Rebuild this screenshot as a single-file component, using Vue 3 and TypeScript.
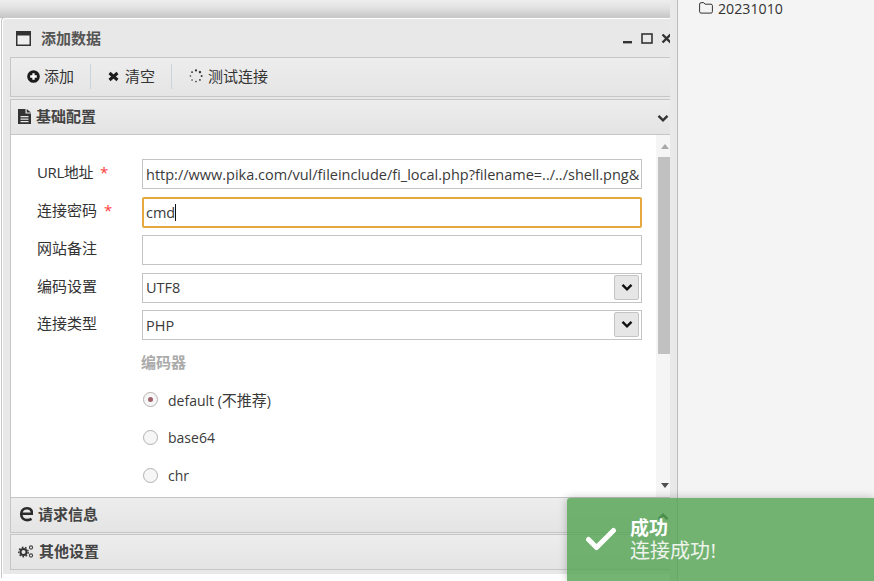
<script setup lang="ts">
interface Row { label: string; value: string; latin?: boolean; required?: boolean; focus?: boolean; select?: boolean }
const rows: Row[] = [
  { label: 'URL地址', value: 'http://www.pika.com/vul/fileinclude/fi_local.php?filename=../../shell.png&', required: true, latin: true },
  { label: '连接密码', value: 'cmd', required: true, focus: true },
  { label: '网站备注', value: '' },
  { label: '编码设置', value: 'UTF8', select: true },
  { label: '连接类型', value: 'PHP', select: true },
]
const radios = [
  { label: 'default (', note: '不推荐', tail: ')', checked: true },
  { label: 'base64', note: '', tail: '', checked: false },
  { label: 'chr', note: '', tail: '', checked: false },
]
const dots = [
  { d: 0, r: 1.1 }, { d: 45, r: 1.2 }, { d: 90, r: 1 }, { d: 135, r: 0.9 },
  { d: 180, r: 0.8 }, { d: 225, r: 0.75 }, { d: 270, r: 0.8 }, { d: 315, r: 0.9 },
]
</script>

<template>
  <div class="page">
    <main class="left">
      <div class="upper"></div>
      <section class="window">
        <header class="titlebar">
          <svg class="win-icon" width="15" height="15" viewBox="0 0 15 15">
            <rect x="0.75" y="0.75" width="13.5" height="13.500" fill="#efefef" stroke="#333" stroke-width="1.5" />
            <rect x="0" y="0" width="15" height="4.500" fill="#333" />
          </svg>
          <span class="win-title">添加数据</span>
          <span class="win-ctrls">
            <svg width="11" height="11" viewBox="0 0 11 11"><rect x="1" y="8" width="9" height="2.4" fill="#333" /></svg>
            <svg width="12" height="11" viewBox="0 0 12 11"><rect x="1" y="1" width="10" height="9" fill="none" stroke="#333" stroke-width="1.6" /></svg>
            <svg width="11" height="11" viewBox="0 0 11 11"><path d="M1.500 1.500 9.500 9.500M9.500 1.500 1.500 9.500" stroke="#333" stroke-width="2.400" /></svg>
          </span>
        </header>

        <div class="inner">
          <div class="toolbar">
            <button class="tool first">
              <svg width="13" height="13" viewBox="0 0 13 13">
                <circle cx="6.500" cy="6.500" r="6.300" fill="#1c1c1c" />
                <path d="M6.500 3.200v6.600M3.200 6.500h6.600" stroke="#fff" stroke-width="2.300" />
              </svg>
              <span>添加</span>
            </button>
            <i class="sep"></i>
            <button class="tool second">
              <svg width="11" height="11" viewBox="0 0 11 11">
                <path d="M1.500 2 9.500 9M9.500 2 1.500 9" stroke="#1c1c1c" stroke-width="3" />
              </svg>
              <span>清空</span>
            </button>
            <i class="sep"></i>
            <button class="tool third">
              <svg width="14" height="14" viewBox="0 0 14 14">
                <circle v-for="o in dots" :key="o.d" cx="7" cy="1.400" :r="o.r" fill="#333" :transform="`rotate(${o.d} 7 7)`" />
              </svg>
              <span>测试连接</span>
            </button>
          </div>

          <div class="acc first-acc">
            <svg width="13" height="15" viewBox="0 0 13 15">
              <path d="M0 0h7.500v4.500H13V15H0zM8.700 0 13 3.400H8.700zM2.500 7v1.200h8V7zm0 2.500v1.200h8V9.500zm0 2.500v1.200h8V12z" fill="#333" fill-rule="evenodd" />
            </svg>
            <span>基础配置</span>
            <svg class="chev" width="12" height="9" viewBox="0 0 12 9"><path d="M1.500 1.800 6 6.300l4.500-4.500" fill="none" stroke="#333" stroke-width="2.400" /></svg>
          </div>

          <div class="content">
            <form class="form" @submit.prevent>
              <div v-for="r in rows" :key="r.label" class="row">
                <label class="lbl" :class="{ latin: r.latin }">{{ r.label }}<em v-if="r.required">*</em></label>
                <div class="field" :class="{ focus: r.focus }">
                  <span class="val">{{ r.value }}</span>
                  <i v-if="r.focus" class="caret"></i>
                  <span v-if="r.select" class="sel-btn">
                    <svg width="12" height="9" viewBox="0 0 12 9"><path d="M1.500 1.800 6 6.300l4.500-4.500" fill="none" stroke="#111" stroke-width="2.400" /></svg>
                  </span>
                </div>
              </div>
              <div class="enc-title">编码器</div>
              <div v-for="o in radios" :key="o.label" class="radio">
                <span class="dot" :class="{ on: o.checked }"></span>
                <span class="radio-text">{{ o.label }}<b v-if="o.note">{{ o.note }}</b>{{ o.tail }}</span>
              </div>
            </form>
            <div class="scroll">
              <i class="arrow up"></i>
              <i class="thumb"></i>
              <i class="arrow down"></i>
            </div>
          </div>

          <div class="acc">
            <svg width="15" height="16" viewBox="0 0 15 15">
              <path d="M3.200 7.200H14C14 3.800 12 1.800 9 1.800 5.400 1.800 3.200 4.400 3.200 7.600 3.200 11.200 5.500 13.600 9 13.600 10.800 13.600 12.200 13.200 13.600 12.400" fill="none" stroke="#2b2b2b" stroke-width="2.600" />
            </svg>
            <span>请求信息</span>
            <svg class="chev" width="12" height="9" viewBox="0 0 12 9"><path d="M1.500 7.200 6 2.700l4.500 4.500" fill="none" stroke="#333" stroke-width="2.400" /></svg>
          </div>
          <div class="acc last-acc">
            <svg width="16" height="15" viewBox="0 0 16 14">
              <circle cx="5.500" cy="7.500" r="3" fill="none" stroke="#333" stroke-width="2" />
              <circle cx="5.500" cy="7.500" r="4.700" fill="none" stroke="#333" stroke-width="1.400" stroke-dasharray="1.700 1.600" />
              <circle cx="13" cy="3" r="1.600" fill="none" stroke="#444" stroke-width="1.100" />
              <circle cx="13" cy="11" r="1.600" fill="none" stroke="#444" stroke-width="1.100" />
            </svg>
            <span>其他设置</span>
          </div>
        </div>
      </section>
    </main>

    <aside class="right">
      <div class="folder">
        <svg width="14" height="12" viewBox="0 0 14 12">
          <path d="M.6 2C.6 1.200 1.200.7 2 .7h2.800l1.300 1.500H12c.8 0 1.400.5 1.400 1.300v6.300c0 .8-.6 1.300-1.400 1.300H2c-.8 0-1.400-.5-1.400-1.300z" fill="none" stroke="#333" stroke-width="1" />
        </svg>
        <span>20231010</span>
      </div>
    </aside>

    <div class="toast">
      <svg width="32" height="26" viewBox="0 0 32 26">
        <path d="M3.500 13.500 11.500 21.500 28.500 4.500" fill="none" stroke="#fff" stroke-width="5" stroke-linejoin="round" stroke-linecap="round" />
      </svg>
      <div class="toast-text">
        <strong>成功</strong>
        <span>连接成功!</span>
      </div>
    </div>
  </div>
</template>

<style>
html, body { margin: 0; padding: 0; }
</style>

<style scoped>
.page {
  position: relative;
  display: flex;
  width: 874px;
  height: 581px;
  overflow: hidden;
  background: #e9e9e9;
  font-family: "Open Sans", "Noto Sans CJK SC", sans-serif;
  font-size: 15px;
  color: #333;
}
.left {
  width: 670px;
  margin-right: 7px;
  flex: none;
  overflow: hidden;
  background: #fff;
  display: flex;
  flex-direction: column;
}
.upper {
  height: 18px;
  flex: none;
  background: linear-gradient(#eeeeee, #e2e2e2 45%, #c8c8c8);
  border-bottom: 1px solid #c4c4c4;
  box-sizing: border-box;
}
.window {
  width: 700px;
  height: 561px;
  margin-left: 1px;
  margin-top: -1px;
  box-sizing: border-box;
  border: 1px solid #c8c8c8;
  border-bottom: 0;
  border-right: none;
  border-top-left-radius: 4px;
  background: #e8e8e8;
  box-shadow: inset 1px 1px 0 #fff;
  display: flex;
  flex-direction: column;
  flex: none;
  position: relative;
}
.window::after {
  content: "";
  display: block;
  height: 4px;
  flex: none;
  background: #fff;
}
.titlebar {
  height: 38px;
  margin-top: 1px;
  padding-top: 1px;
  box-sizing: border-box;
  flex: none;
  display: flex;
  align-items: center;
  padding-left: 14px;
  font-weight: 700;
  color: #555;
  position: relative;
}
.win-title { margin: 0 0 2px 10px; }
.win-ctrls {
  position: absolute;
  left: 620px;
  top: 14px;
  display: flex;
  gap: 8px;
}
.inner {
  margin-left: 8px;
  flex: 1;
  display: flex;
  flex-direction: column;
  min-height: 0;
}
.toolbar {
  height: 40px;
  flex: none;
  box-sizing: border-box;
  border: 1px solid #c6c6c6;
  padding-bottom: 2px;
  background: linear-gradient(#ededed, #e5e5e5);
  display: flex;
  align-items: center;
  margin-bottom: 2px;
}
.tool {
  appearance: none;
  border: 0;
  background: none;
  padding: 0 16px 0 17px;
  font: inherit;
  color: #333;
  display: flex;
  align-items: center;
  gap: 5px;
}
.tool span { margin-bottom: 2px; }
.tool.first { padding-left: 16px; gap: 4px; }
.tool.second { gap: 6px; }
.sep { width: 1px; height: 25px; background: #c9d4dc; }
.acc {
  height: 36px;
  flex: none;
  box-sizing: border-box;
  border: 1px solid #c6c6c6;
  border-right: none;
  padding-bottom: 2px;
  background: linear-gradient(#ededed, #e4e4e4);
  display: flex;
  align-items: center;
  padding-left: 7px;
  gap: 5px;
  font-weight: 700;
  color: #444;
  position: relative;
}
.acc > span { margin-bottom: 2px; }
.chev { position: absolute; left: 646px; top: 14px; }
.last-acc { margin-top: 1px; }
.content {
  height: 362px;
  flex: none;
  background: #fff;
  border-left: 1px solid #c6c6c6;
  display: flex;
  overflow: hidden;
  box-sizing: border-box;
  width: 660px;
}
.form {
  flex: 1;
  padding: 24px 0 0 26px;
  min-width: 0;
}
.row {
  display: flex;
  align-items: flex-start;
  height: 30px;
  margin-bottom: 7.85px;
}
.lbl {
  width: 105px;
  flex: none;
  color: #333;
  line-height: 26px;
}
.lbl.latin { letter-spacing: -0.4px; }
.lbl em {
  font-style: normal;
  color: #ff3b3b;
  margin-left: 7px;
}
.field {
  width: 500px;
  height: 30px;
  box-sizing: border-box;
  border: 1px solid #c4c4c4;
  padding: 0 3px;
  display: flex;
  align-items: center;
  position: relative;
  white-space: nowrap;
  overflow: hidden;
  color: #3a3a3a;
  font-size: 14.5px;
}
.field.focus { border: 2px solid #e5a93d; border-radius: 2px; padding: 0 2px; height: 31px; }
.caret { width: 1px; height: 17px; background: #111; }
.sel-btn {
  position: absolute;
  right: 2px;
  top: 1px;
  width: 25px;
  height: 25px;
  box-sizing: border-box;
  border: 1px solid #c4c4c4;
  border-radius: 2px;
  background: #e6e6e6;
  display: flex;
  align-items: center;
  justify-content: center;
}
.enc-title {
  margin: 12px 0 -1px 104px;
  font-weight: 700;
  color: #aaa;
  line-height: 20px;
}
.radio {
  margin: 18px 0 0 105px;
  height: 20px;
  display: flex;
  align-items: center;
  color: #3a3a3a;
  font-size: 14px;
}
.radio-text b { font-weight: 400; font-size: 15px; }
.dot {
  width: 15px;
  height: 15px;
  box-sizing: border-box;
  border: 1px solid #b5b0b0;
  border-radius: 50%;
  margin: 0 10px 0 1px;
  background: #f6f6f6;
  display: flex;
  align-items: center;
  justify-content: center;
}
.dot.on::after {
  content: "";
  width: 5px;
  height: 5px;
  border-radius: 50%;
  background: #a0636b;
}
.scroll {
  width: 14px;
  flex: none;
  background: #f5f5f5;
  position: relative;
}
.thumb {
  position: absolute;
  top: 22px;
  right: 0;
  width: 12px;
  height: 197px;
  background: #c1c1c1;
}
.arrow {
  position: absolute;
  right: 1px;
  width: 0;
  height: 0;
  border-left: 4px solid transparent;
  border-right: 4px solid transparent;
}
.arrow.up { top: 9px; border-bottom: 5px solid #a8a8a8; }
.arrow.down { top: 348px; border-top: 5px solid #505050; }
.right {
  flex: 1;
  background: #f4f4f4;
  border-left: 1px solid #bcbcbc;
}
.folder {
  display: flex;
  align-items: center;
  gap: 5px;
  padding-left: 21px;
  height: 16px;
  color: #333;
  font-size: 14.2px;
}
.toast {
  position: absolute;
  left: 567px;
  top: 498px;
  right: 0;
  bottom: 0;
  background: rgba(81, 163, 81, 0.8);
  box-shadow: 0 0 8px rgba(0, 0, 0, 0.25);
  border-top-left-radius: 3px;
  display: flex;
  align-items: flex-start;
  color: #fff;
}
.toast svg { margin: 28px 0 0 18px; }
.toast-text {
  margin: 19px 0 0 13px;
  display: flex;
  flex-direction: column;
  font-size: 20px;
  line-height: 23px;
  font-family: "Liberation Serif", "Noto Sans CJK SC", serif;
}
.toast-text strong { font-weight: 700; font-size: 19px; }
.toast-text span { color: #eef3ec; }
</style>
